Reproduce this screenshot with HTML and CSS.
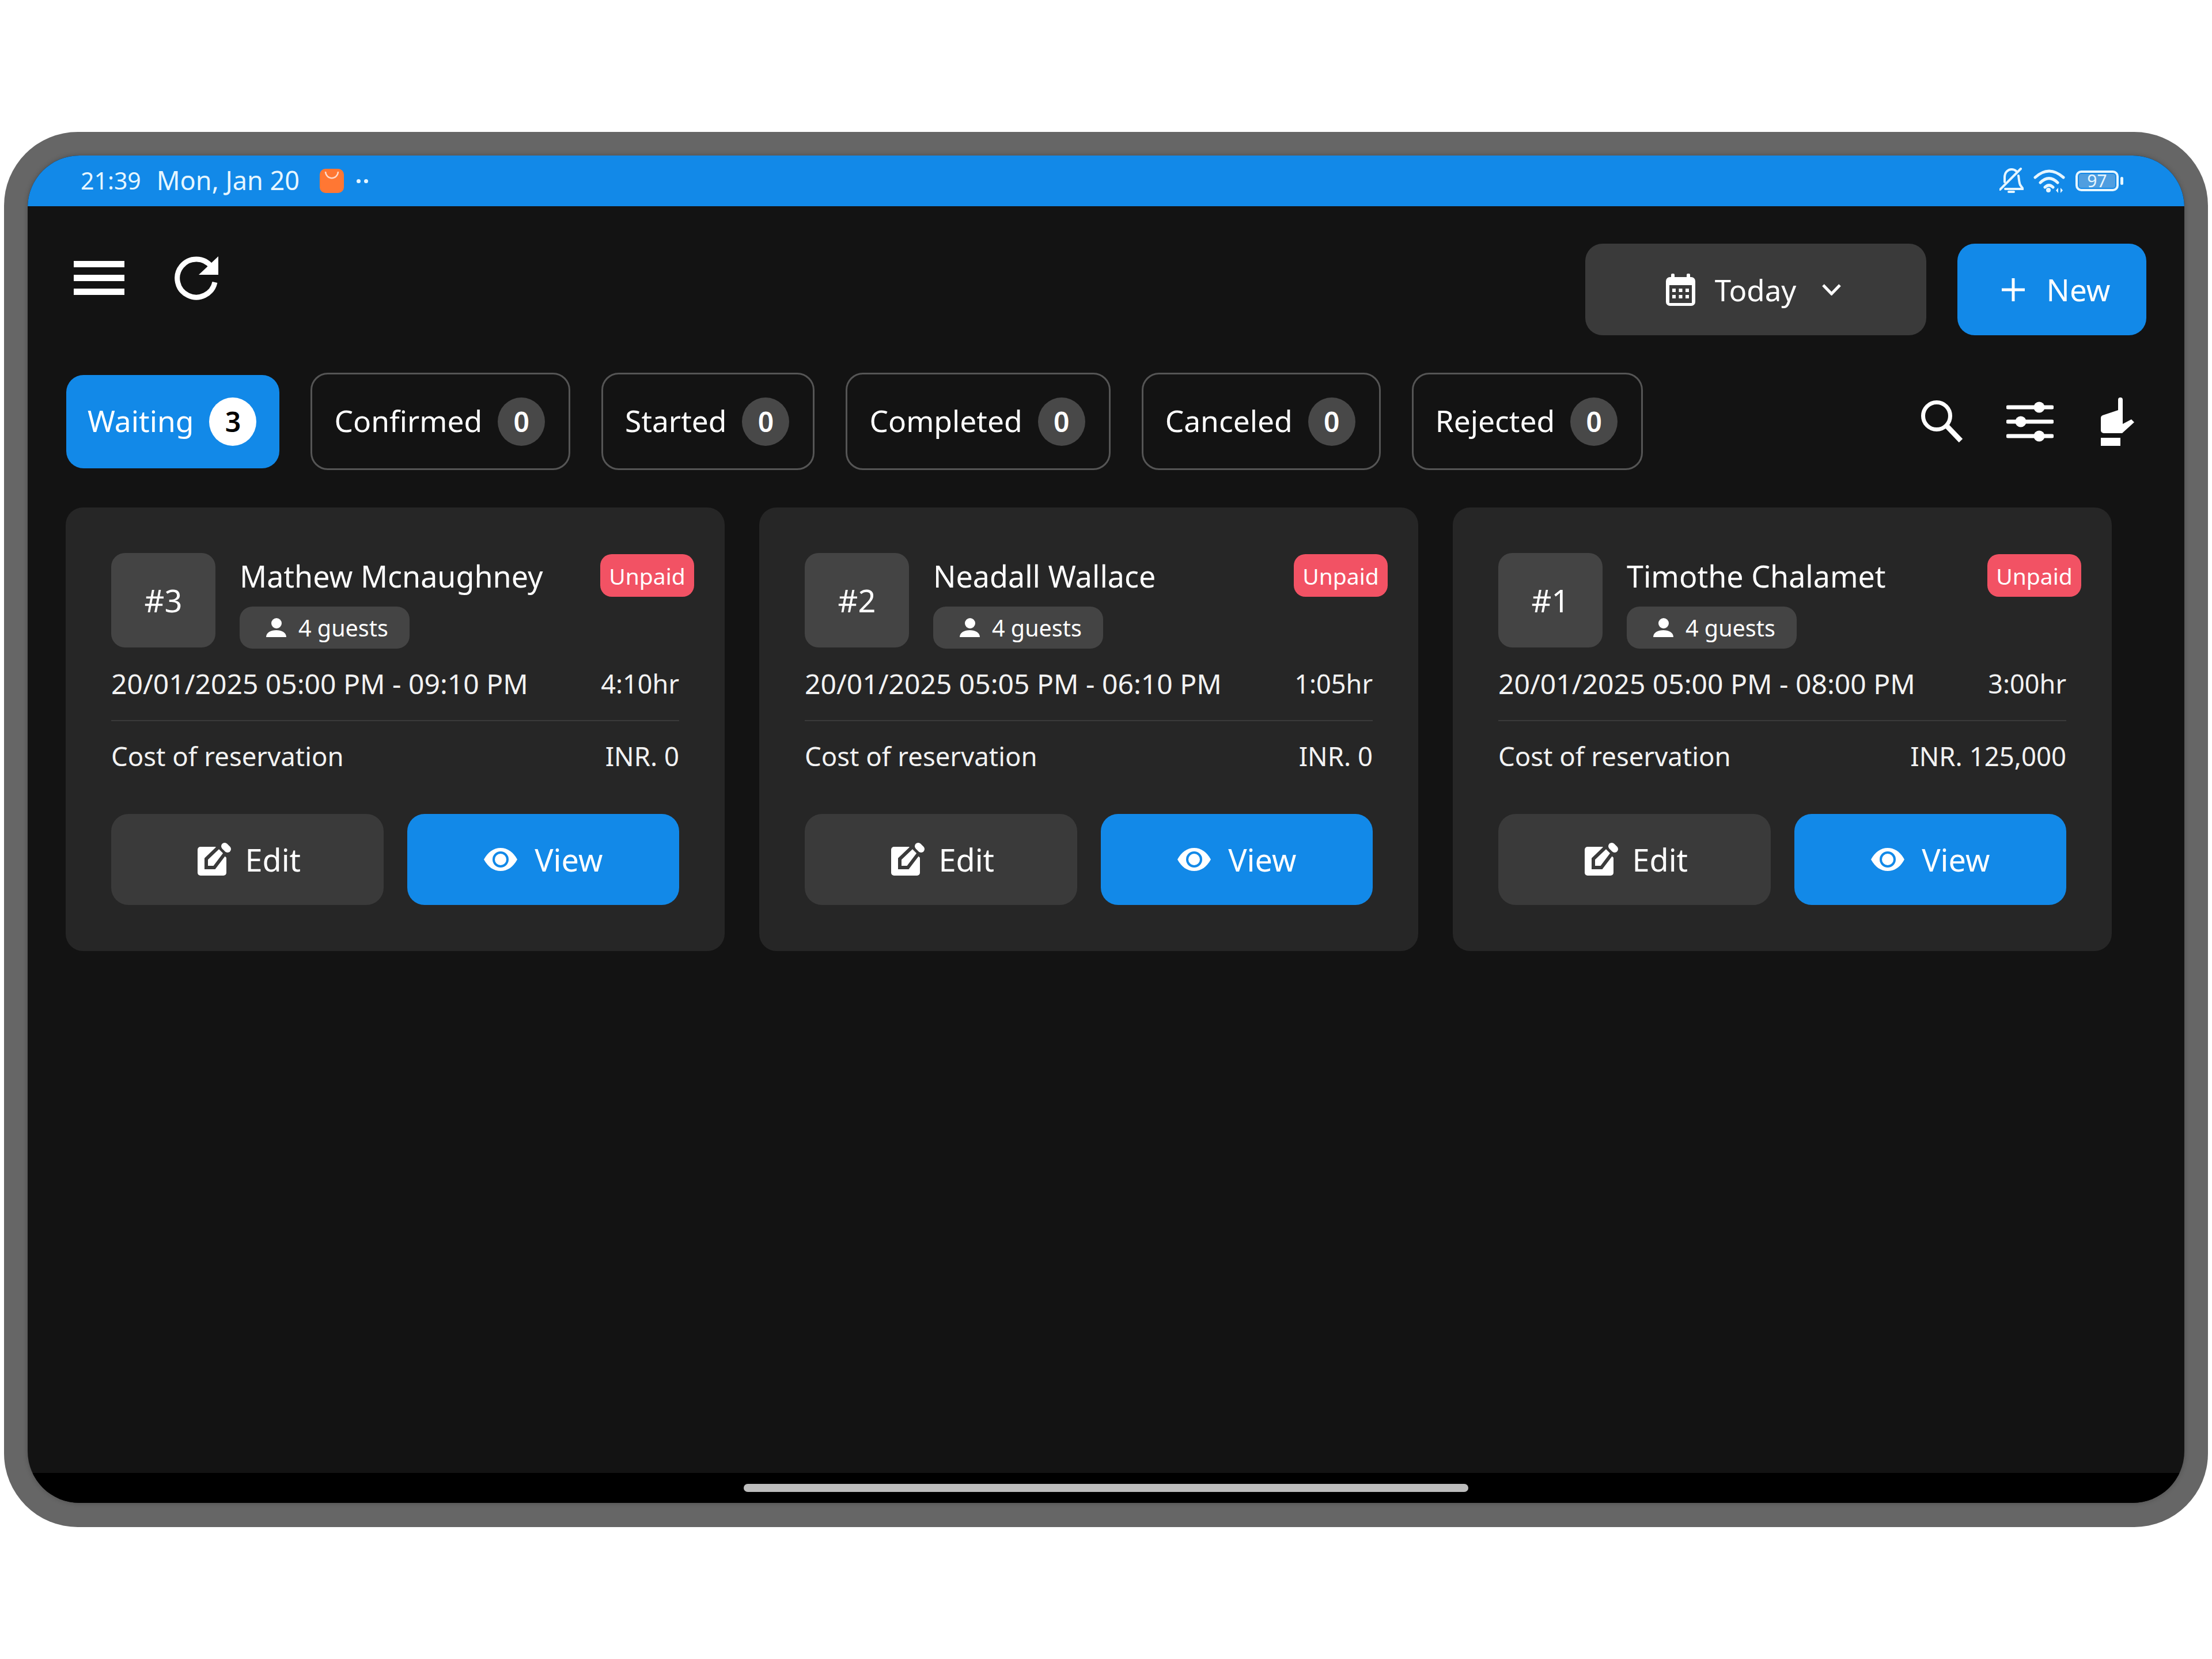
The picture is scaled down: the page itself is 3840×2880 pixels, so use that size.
FILE: index.html
```html
<!DOCTYPE html>
<html lang="en">
<head>
<meta charset="utf-8">
<title>Reservations</title>
<link rel="stylesheet" href="styles.css">
</head>
<body>
<div class="device">
  <div class="screen">
    <div class="status">
      <div class="status-left">
        <span class="time">21:39</span>
        <span class="date">Mon, Jan 20</span>
        <svg class="app-icon" viewBox="0 0 42 42"><rect width="42" height="42" rx="10" fill="#ff7733"/><path d="M10 5c1 15 21 15 22 0" fill="none" stroke="#ffd9c8" stroke-width="2.5"/></svg>
        <span class="dots"><i></i><i></i></span>
      </div>
      <div class="status-right">
        <svg class="st-bell" viewBox="0 0 42 46" fill="none" stroke="#e6f6ff" stroke-width="4" stroke-linecap="round" stroke-linejoin="round"><path d="M1 38L37 2"/><path d="M9 25V17C9 8 15 3 21 3c3 0 6 1 8 3"/><path d="M33 14c1 6 1 12 3 16l5 7H10"/><path d="M16 42h9"/></svg>
        <svg class="st-wifi" viewBox="0 0 55 42" fill="none" stroke="#e6f6ff" stroke-width="5" stroke-linecap="round"><path d="M3 15Q27-7 52 15"/><path d="M12 24Q27 9 42 24"/><path d="M20 32Q27 25 34 32"/><circle cx="26" cy="37" r="4" fill="#e6f6ff" stroke="none"/><path d="M43 33v9l-4-4.500zM47 42v-9l4 4.500z" fill="#e6f6ff" stroke="none"/></svg>
        <div class="battery"><span class="battery-level">97</span></div>
      </div>
    </div>
    <main class="main">
      <header class="toolbar">
        <div class="toolbar-left">
          <svg class="ic-menu" viewBox="0 0 88 60"><rect width="88" height="11"/><rect y="24" width="88" height="11"/><rect y="48" width="88" height="11"/></svg>
          <svg class="ic-refresh" viewBox="0 0 78 78"><path d="M66 19A33 33 0 1 0 72 46" fill="none" stroke="#fff" stroke-width="9"/><path d="M78 1V33H44Z" fill="#fff"/></svg>
        </div>
        <div class="toolbar-right">
          <button class="btn btn-dark btn-today">
            <svg class="ic-cal" viewBox="0 0 51 56"><rect x="9" width="6" height="12" rx="2" fill="#fff"/><rect x="36" width="6" height="12" rx="2" fill="#fff"/><rect y="6" width="51" height="50" rx="7" fill="#fff"/><rect x="6" y="20" width="39" height="31" fill="#3a3a3a"/><g fill="#fff"><rect x="11" y="26" width="6" height="6"/><rect x="22.500" y="26" width="6" height="6"/><rect x="34" y="26" width="6" height="6"/><rect x="11" y="37" width="6" height="6"/><rect x="22.500" y="37" width="6" height="6"/><rect x="34" y="37" width="6" height="6"/></g></svg>
            <span>Today</span>
            <svg class="ic-chev" viewBox="0 0 33 20"><path d="M2 2L16.500 17L31 2" fill="none" stroke="#fff" stroke-width="5"/></svg>
          </button>
          <button class="btn btn-blue btn-new">
            <svg class="ic-plus" viewBox="0 0 40 40"><path d="M20 0V40M0 20H40" stroke="#fff" stroke-width="5"/></svg>
            <span>New</span>
          </button>
        </div>
      </header>
      <div class="filters">
        <div class="tabs">
          <div class="tab tab-active"><span>Waiting</span><b class="count">3</b></div>
          <div class="tab"><span>Confirmed</span><b class="count">0</b></div>
          <div class="tab"><span>Started</span><b class="count">0</b></div>
          <div class="tab"><span>Completed</span><b class="count">0</b></div>
          <div class="tab"><span>Canceled</span><b class="count">0</b></div>
          <div class="tab"><span>Rejected</span><b class="count">0</b></div>
        </div>
        <div class="filter-icons">
          <svg class="ic-search" viewBox="0 0 72 73" fill="none" stroke="#fff"><circle cx="27" cy="27" r="23.500" stroke-width="7"/><path d="M45 45L69 70" stroke-width="9"/></svg>
          <svg class="ic-sliders" viewBox="0 0 82 72"><g stroke="#fff" stroke-width="7" stroke-linecap="round"><path d="M3 11H79M3 36H79M3 61H79"/></g><g fill="#fff"><circle cx="57" cy="11" r="9.500"/><circle cx="25" cy="36" r="9.500"/><circle cx="57" cy="61" r="9.500"/></g></svg>
          <svg class="ic-hand" viewBox="0 0 58 84" fill="#fff"><path d="M30 4a4 4 0 0 1 8 0V46L53 38l5 5L37 62H5a5 5 0 0 1-5-5V36a5 5 0 0 1 3-5L30 22Z"/><rect y="70" width="34" height="14"/></svg>
        </div>
      </div>
      <section class="cards">
        <article class="card">
          <span class="unpaid">Unpaid</span>
          <div class="card-head">
            <div class="num">#3</div>
            <div class="info">
              <div class="name">Mathew Mcnaughney</div>
              <div class="guests"><svg class="ic-person" viewBox="0 0 35 33"><circle cx="18" cy="9" r="9"/><path d="M0 33c0-8 8-12 17.500-12S35 25 35 33Z"/></svg><span>4 guests</span></div>
            </div>
          </div>
          <div class="row row-time"><span>20/01/2025 05:00 PM - 09:10 PM</span><span class="small">4:10hr</span></div>
          <div class="divider"></div>
          <div class="row row-cost"><span>Cost of reservation</span><span>INR. 0</span></div>
          <div class="actions">
            <button class="btn btn-dark btn-act btn-edit"><svg class="ic-edit" viewBox="0 0 60 60"><path d="M5 8H31L50 27V53a5 5 0 0 1-5 5H5a5 5 0 0 1-5-5V13a5 5 0 0 1 5-5Z" fill="#fff"/><path d="M15 44V29L37 8L48 19L29 44Z" fill="#fff" stroke="#3a3a3a" stroke-width="6"/><path d="M47 7L52 12" stroke="#fff" stroke-width="12" stroke-linecap="round"/></svg><span>Edit</span></button>
            <button class="btn btn-blue btn-act"><svg class="ic-eye" viewBox="0 0 60 42"><path d="M1 21C8 8 18 1 30 1S52 8 59 21C52 34 42 41 30 41S8 34 1 21Z" fill="#fff"/><circle cx="30" cy="21" r="12" fill="#fff" stroke="#1289e8" stroke-width="4"/></svg><span>View</span></button>
          </div>
        </article>
        <article class="card">
          <span class="unpaid">Unpaid</span>
          <div class="card-head">
            <div class="num">#2</div>
            <div class="info">
              <div class="name">Neadall Wallace</div>
              <div class="guests"><svg class="ic-person" viewBox="0 0 35 33"><circle cx="18" cy="9" r="9"/><path d="M0 33c0-8 8-12 17.500-12S35 25 35 33Z"/></svg><span>4 guests</span></div>
            </div>
          </div>
          <div class="row row-time"><span>20/01/2025 05:05 PM - 06:10 PM</span><span class="small">1:05hr</span></div>
          <div class="divider"></div>
          <div class="row row-cost"><span>Cost of reservation</span><span>INR. 0</span></div>
          <div class="actions">
            <button class="btn btn-dark btn-act btn-edit"><svg class="ic-edit" viewBox="0 0 60 60"><path d="M5 8H31L50 27V53a5 5 0 0 1-5 5H5a5 5 0 0 1-5-5V13a5 5 0 0 1 5-5Z" fill="#fff"/><path d="M15 44V29L37 8L48 19L29 44Z" fill="#fff" stroke="#3a3a3a" stroke-width="6"/><path d="M47 7L52 12" stroke="#fff" stroke-width="12" stroke-linecap="round"/></svg><span>Edit</span></button>
            <button class="btn btn-blue btn-act"><svg class="ic-eye" viewBox="0 0 60 42"><path d="M1 21C8 8 18 1 30 1S52 8 59 21C52 34 42 41 30 41S8 34 1 21Z" fill="#fff"/><circle cx="30" cy="21" r="12" fill="#fff" stroke="#1289e8" stroke-width="4"/></svg><span>View</span></button>
          </div>
        </article>
        <article class="card">
          <span class="unpaid">Unpaid</span>
          <div class="card-head">
            <div class="num">#1</div>
            <div class="info">
              <div class="name">Timothe Chalamet</div>
              <div class="guests"><svg class="ic-person" viewBox="0 0 35 33"><circle cx="18" cy="9" r="9"/><path d="M0 33c0-8 8-12 17.500-12S35 25 35 33Z"/></svg><span>4 guests</span></div>
            </div>
          </div>
          <div class="row row-time"><span>20/01/2025 05:00 PM - 08:00 PM</span><span class="small">3:00hr</span></div>
          <div class="divider"></div>
          <div class="row row-cost"><span>Cost of reservation</span><span>INR. 125,000</span></div>
          <div class="actions">
            <button class="btn btn-dark btn-act btn-edit"><svg class="ic-edit" viewBox="0 0 60 60"><path d="M5 8H31L50 27V53a5 5 0 0 1-5 5H5a5 5 0 0 1-5-5V13a5 5 0 0 1 5-5Z" fill="#fff"/><path d="M15 44V29L37 8L48 19L29 44Z" fill="#fff" stroke="#3a3a3a" stroke-width="6"/><path d="M47 7L52 12" stroke="#fff" stroke-width="12" stroke-linecap="round"/></svg><span>Edit</span></button>
            <button class="btn btn-blue btn-act"><svg class="ic-eye" viewBox="0 0 60 42"><path d="M1 21C8 8 18 1 30 1S52 8 59 21C52 34 42 41 30 41S8 34 1 21Z" fill="#fff"/><circle cx="30" cy="21" r="12" fill="#fff" stroke="#1289e8" stroke-width="4"/></svg><span>View</span></button>
          </div>
        </article>
      </section>
    </main>
    <footer class="navbar"><div class="home-bar"></div></footer>
  </div>
</div>
</body>
</html>
```
FILE: styles.css
```css
* { box-sizing: border-box; }
html, body { margin: 0; padding: 0; background: #fff; }
body {
  width: 3840px;
  height: 2880px;
  padding: 229px 7px 0;
  font-family: "Noto Sans", "Liberation Sans", sans-serif;
  color: #fff;
  overflow: hidden;
}
svg { display: block; flex: none; }
.device {
  width: 3826px;
  height: 2422px;
  background: #666;
  border-radius: 128px;
  padding: 41px 41px 42px;
}
.screen {
  height: 100%;
  border-radius: 90px;
  overflow: hidden;
  display: flex;
  flex-direction: column;
  background: #131313;
  box-shadow: 0 0 8px rgba(0,0,0,.25);
}
.status {
  height: 88px;
  flex: none;
  background: #1289e8;
  color: #e6f6ff;
  display: flex;
  align-items: center;
  justify-content: space-between;
  padding: 0 107px 0 92px;
}
.status-left, .status-right { display: flex; align-items: center; }
.time { font-size: 41px; margin: -3px 27px 0 0; }
.date { font-size: 45px; margin-top: -3px; }
.app-icon { width: 42px; height: 42px; margin-left: 35px; }
.dots { display: flex; gap: 6px; margin-left: 22px; }
.dots i { width: 7px; height: 7px; border-radius: 50%; background: #e6f6ff; }
.st-bell { width: 42px; height: 46px; }
.st-wifi { width: 55px; height: 42px; margin-left: 17px; }
.battery {
  position: relative;
  width: 75px;
  height: 36px;
  margin: 0 7px 0 18px;
  border: 4px solid #e6f6ff;
  border-radius: 10px;
  padding: 2px;
  display: flex;
}
.battery::after {
  content: "";
  position: absolute;
  right: -12px;
  top: 7px;
  width: 5px;
  height: 14px;
  border-radius: 3px;
  background: #e6f6ff;
}
.battery-level {
  flex: 1;
  background: #4f9ee0;
  border-radius: 4px;
  font-size: 30px;
  line-height: 24px;
  text-align: center;
}
.main { flex: 1; min-height: 0; }
.toolbar {
  display: flex;
  justify-content: space-between;
  align-items: flex-start;
  padding: 65px 66px 0 80px;
}
.toolbar-left { display: flex; align-items: center; gap: 85px; padding-top: 21px; }
.ic-menu { width: 88px; height: 60px; fill: #fff; }
.ic-refresh { width: 78px; height: 78px; }
.toolbar-right { display: flex; gap: 54px; }
.btn {
  border: 0;
  border-radius: 30px;
  color: #fff;
  font: inherit;
  font-size: 54px;
  display: flex;
  align-items: center;
  justify-content: center;
  padding: 0;
}
.btn-dark { background: #3a3a3a; }
.btn-blue { background: #1289e8; }
.btn-today { width: 592px; height: 159px; padding-right: 8px; font-size: 51px; }
.btn-new { width: 328px; height: 159px; gap: 38px; padding-left: 14px; font-size: 53px; }
.ic-cal { width: 51px; height: 56px; margin-right: 34px; }
.ic-chev { width: 33px; height: 20px; margin-left: 45px; }
.ic-plus { width: 40px; height: 40px; }
.filters {
  display: flex;
  justify-content: space-between;
  align-items: center;
  margin-top: 65px;
  padding: 0 87px 0 67px;
}
.tabs { display: flex; align-items: center; gap: 54px; }
.tab {
  height: 169px;
  padding: 0 41px 0 38px;
  border: 3px solid #555;
  border-radius: 30px;
  display: flex;
  align-items: center;
  gap: 27px;
  font-size: 51.5px;
}
.tab span { margin-top: -3px; }
.tab-active {
  height: 162px;
  padding: 0 40px 0 37px;
  border: 0;
  background: #1289e8;
}
.count {
  width: 82px;
  height: 84px;
  border-radius: 50%;
  background: #484848;
  color: #fff;
  font-weight: 600;
  font-size: 48px;
  display: flex;
  align-items: center;
  justify-content: center;
}
.tab-active .count { background: #fff; color: #000; }
.filter-icons { display: flex; align-items: center; gap: 82px; }
.ic-search { width: 72px; height: 73px; margin-right: -6px; }
.ic-sliders { width: 82px; height: 72px; }
.ic-hand { width: 58px; height: 84px; }
.cards {
  display: grid;
  grid-template-columns: repeat(3, 1144px);
  gap: 60px;
  margin-top: 65px;
  padding-left: 66px;
}
.card {
  position: relative;
  height: 770px;
  padding: 79px;
  background: #262626;
  border-radius: 30px;
}
.unpaid {
  position: absolute;
  top: 81px;
  right: 53px;
  width: 163px;
  height: 74px;
  border-radius: 20px;
  background: #f25264;
  font-size: 39px;
  display: flex;
  align-items: center;
  justify-content: center;
}
.card-head { display: flex; gap: 42px; }
.num {
  width: 181px;
  height: 164px;
  border-radius: 24px;
  background: #444;
  font-size: 54px;
  display: flex;
  align-items: center;
  justify-content: center;
}
.name { font-size: 52px; line-height: 64px; margin-top: 8px; }
.guests {
  display: flex;
  align-items: center;
  width: 295px;
  height: 73px;
  margin-top: 21px;
  padding-left: 46px;
  gap: 21px;
  border-radius: 22px;
  background: #444;
  font-size: 39.5px;
}
.ic-person { width: 35px; height: 33px; fill: #fff; }
.row {
  display: flex;
  justify-content: space-between;
  font-size: 45.5px;
  line-height: 60px;
  color: #f2f2f2;
}
.row-time { margin-top: 31px; font-size: 48px; }
.row-time .small { font-size: 45px; }
.divider { height: 2px; background: #3a3a3a; margin-top: 33px; }
.row-cost { margin-top: 30px; }
.actions {
  display: grid;
  grid-template-columns: 1fr 1fr;
  gap: 41px;
  margin-top: 71px;
}
.btn-act { height: 158px; gap: 29px; }
.btn-edit { gap: 22px; padding-left: 7px; }
.ic-edit { width: 60px; height: 60px; }
.ic-eye { width: 60px; height: 42px; }
.navbar {
  flex: none;
  height: 52px;
  background: #000;
  display: flex;
  justify-content: center;
  padding-top: 19px;
}
.home-bar { width: 1258px; height: 14px; border-radius: 7px; background: #bdbdbd; }
```
